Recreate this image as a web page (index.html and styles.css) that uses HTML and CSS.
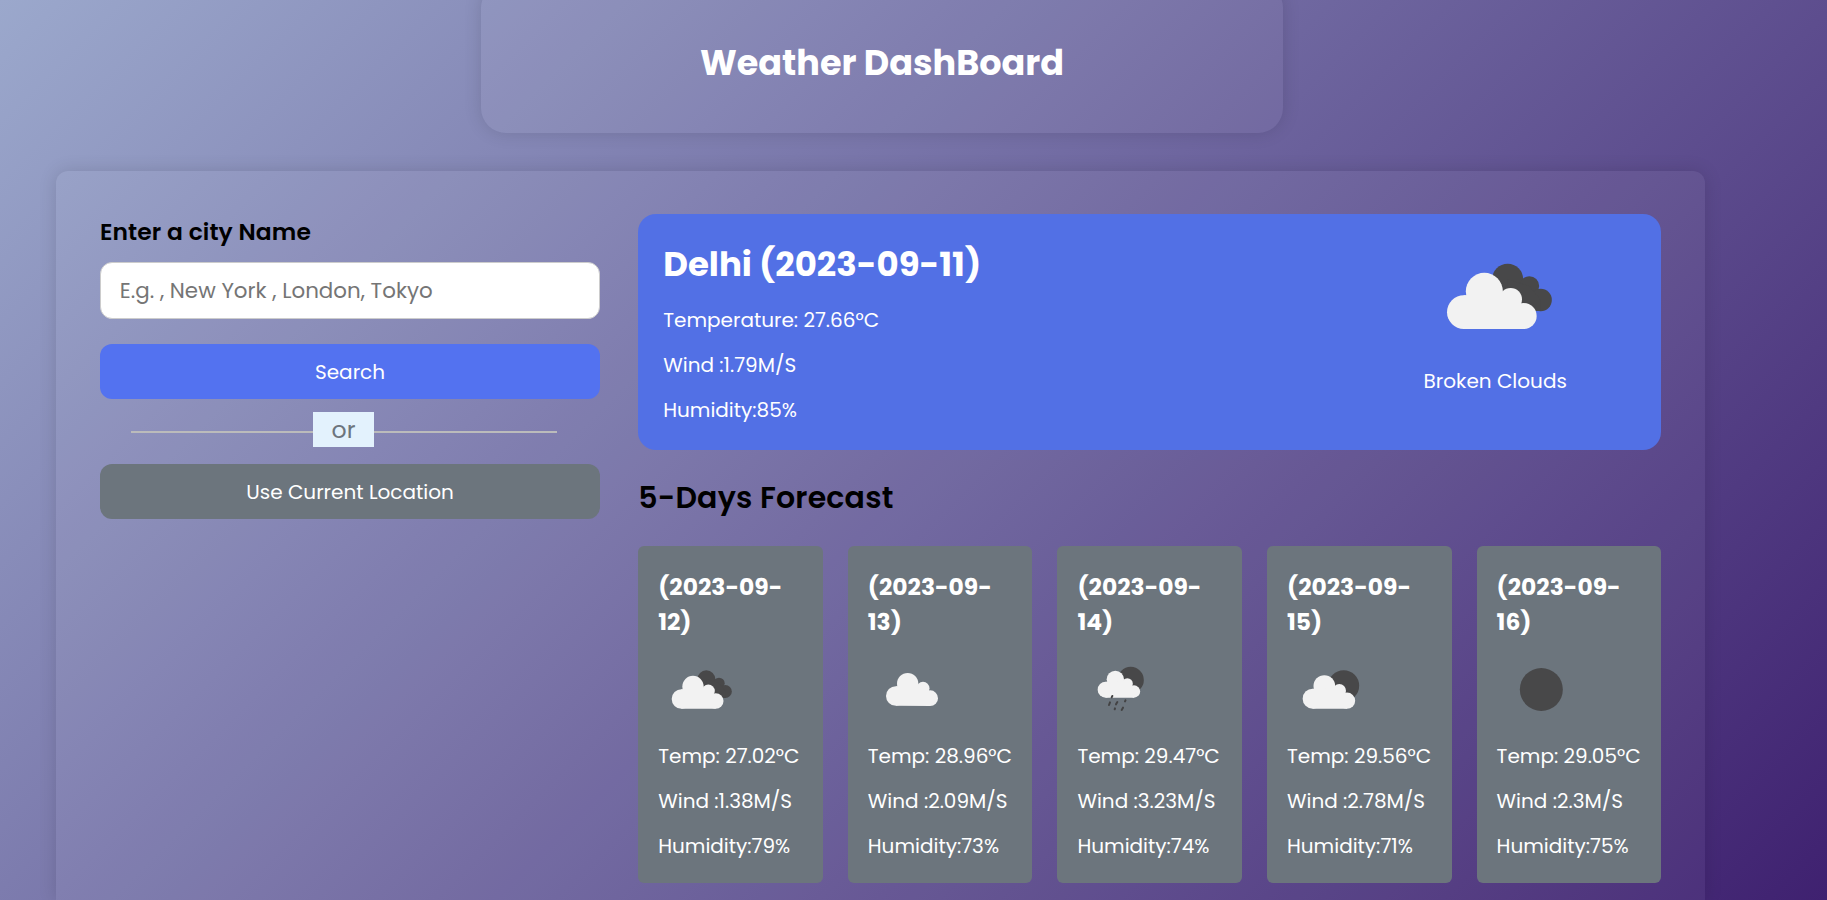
FILE: index.html
```html
<!DOCTYPE html>
<html lang="en">
<head>
<meta charset="utf-8">
<title>Weather DashBoard</title>
<link rel="stylesheet" href="styles.css">
</head>
<body>
<header class="header"><h1 class="title">Weather DashBoard</h1></header>
<main class="container">
  <section class="form">
    <h3 class="label">Enter a city Name</h3>
    <input class="city" type="text" placeholder="E.g. , New York , London, Tokyo">
    <button class="btn search">Search</button>
    <div class="separator"><i class="line line-start"></i><span class="or">or</span><i class="line"></i></div>
    <button class="btn location">Use Current Location</button>
  </section>
  <section class="data">
    <div class="current">
      <div class="details">
        <h2 class="city-name">Delhi (2023-09-11)</h2>
        <p class="row">Temperature: 27.66°C</p>
        <p class="row">Wind :1.79M/S</p>
        <p class="row">Humidity:85%</p>
      </div>
      <div class="summary">
        <svg class="icon-lg" viewBox="165 81 360 240">
          <g class="dark"><circle cx="383" cy="148" r="46.5"/><circle cx="448" cy="168" r="29.5"/><circle cx="482" cy="210" r="33.5"/><path d="M383 148L448 168L482 210V243H383Z"/></g>
          <g class="light"><circle cx="251.500" cy="246.500" r="50.500"/><circle cx="313" cy="184" r="55.500"/><circle cx="392" cy="208" r="34"/><circle cx="431" cy="258" r="39"/><path d="M251 297V196H313L392 200L431 240V297Z"/></g>
        </svg>
        <p class="desc">Broken Clouds</p>
      </div>
    </div>
    <h2 class="forecast-title">5-Days Forecast</h2>
    <div class="cards">
      <article class="card">
        <h3 class="date">(2023-09-12)</h3>
        <svg class="icon" viewBox="85 387 240 180">
          <g class="dark"><circle cx="230" cy="448" r="27"/><circle cx="268" cy="460" r="17"/><circle cx="287" cy="484.500" r="19.500"/><path d="M230 448L268 460L287 484V504H230Z"/></g>
          <g class="light"><circle cx="155.500" cy="507" r="29.500"/><circle cx="190" cy="469.500" r="32"/><circle cx="236" cy="483" r="19.500"/><circle cx="258" cy="513" r="23.500"/><path d="M155 536.500V478H190L236 478L258 500V536.500Z"/></g>
        </svg>
        <p class="row">Temp: 27.02°C</p><p class="row">Wind :1.38M/S</p><p class="row">Humidity:79%</p>
      </article>
      <article class="card">
        <h3 class="date">(2023-09-13)</h3>
        <svg class="icon" viewBox="714 387 240 180">
          <g class="light"><circle cx="797.500" cy="498" r="29.500"/><circle cx="833" cy="461" r="32"/><circle cx="879" cy="475" r="19.500"/><circle cx="900.500" cy="504.500" r="23.500"/><path d="M798 527.500V469H833L879 470L900 490V528Z"/></g>
        </svg>
        <p class="row">Temp: 28.96°C</p><p class="row">Wind :2.09M/S</p><p class="row">Humidity:73%</p>
      </article>
      <article class="card">
        <h3 class="date">(2023-09-14)</h3>
        <svg class="icon" viewBox="112 387 240 180">
          <circle class="dark" cx="273" cy="450" r="39.500"/>
          <g class="light"><circle cx="198" cy="479" r="24"/><circle cx="227" cy="448" r="26"/><circle cx="263" cy="461" r="16.500"/><circle cx="283" cy="484.500" r="18.500"/><path d="M198 503V455H227L263 458L283 475V503Z"/></g>
          <path class="rain" d="M218 498L216 502M211 517L208 525M233 516L229 523M257.500 511L256 514M226 535L225 538M250 533L246 540"/>
        </svg>
        <p class="row">Temp: 29.47°C</p><p class="row">Wind :3.23M/S</p><p class="row">Humidity:74%</p>
      </article>
      <article class="card">
        <h3 class="date">(2023-09-15)</h3>
        <svg class="icon" viewBox="741 387 240 180">
          <circle class="dark" cx="911" cy="467.500" r="46.500"/>
          <g class="light"><circle cx="818" cy="506" r="30"/><circle cx="853" cy="468" r="32.500"/><circle cx="898" cy="482" r="20"/><circle cx="921" cy="512" r="24.500"/><path d="M818 536.500V476H853L898 478L921 500V536.500Z"/></g>
        </svg>
        <p class="row">Temp: 29.56°C</p><p class="row">Wind :2.78M/S</p><p class="row">Humidity:71%</p>
      </article>
      <article class="card">
        <h3 class="date">(2023-09-16)</h3>
        <svg class="icon" viewBox="140 387 240 180"><circle class="dark" cx="273" cy="478.500" r="64.500"/></svg>
        <p class="row">Temp: 29.05°C</p><p class="row">Wind :2.3M/S</p><p class="row">Humidity:75%</p>
      </article>
    </div>
  </section>
</main>
</body>
</html>
```

FILE: styles.css
```css
* { margin: 0; padding: 0; box-sizing: border-box; }
body {
  height: 900px;
  overflow: hidden;
  display: flow-root;
  font-family: "Poppins", "Inter", sans-serif;
  background: linear-gradient(135deg, #9ba8cc, #3f2170);
}
.header {
  width: 802px;
  height: 150px;
  margin: -17px 0 0 481px;
  padding-top: 10px;
  display: flex;
  align-items: center;
  justify-content: center;
  border-radius: 25px;
  background: rgba(255, 255, 255, .05);
  box-shadow: 0 0 18px rgba(0, 0, 0, .13);
}
.title { font-size: 35px; line-height: 50px; font-weight: 700; color: #fff; white-space: nowrap; }
.container {
  display: flex;
  gap: 38.2px;
  width: 1649px;
  height: 729px;
  margin: 38px 0 0 56px;
  padding: 43px 43.8px 0 44px;
  border-radius: 12px 12px 0 0;
  background: rgba(255, 255, 255, .05);
  box-shadow: 0 0 18px rgba(0, 0, 0, .13);
}
.form { width: 500px; flex: none; display: flex; flex-direction: column; }
.label { margin: 2px 0 14px; font-size: 23.4px; line-height: 32px; font-weight: 600; letter-spacing: .1px; color: #000; }
.city {
  height: 57px;
  padding: 0 18.75px;
  border: 1px solid #ccc;
  border-radius: 12px;
  background: #fff;
  font: 400 21.4px "Poppins", "Inter", sans-serif;
}
.city::placeholder { color: #757575; }
.btn {
  height: 55px;
  border: 0;
  border-radius: 12px;
  color: #fff;
  font: 400 20px "Poppins", "Inter", sans-serif;
}
.search { margin-top: 25px; background: #5372f0; }
.location { background: #6c757d; }
.separator { display: flex; align-items: flex-start; height: 35px; margin: 13px 0 17px; padding: 0 43px 0 31px; }
.line { flex: 1; height: 2px; margin-top: 19px; background: #bbb; }
.line-start { flex: 0 0 182px; }
.or { width: 61px; height: 35px; background: #e3f2fd; color: #6c757d; font-size: 23.6px; line-height: 35px; text-align: center; }
.data { flex: 1; min-width: 0; }
.current {
  display: flex;
  justify-content: space-between;
  height: 236px;
  padding: 25px 86px 0 25px;
  border-radius: 18px;
  background: #5270e5;
  color: #fff;
}
.city-name { margin-bottom: 9px; font-size: 34px; line-height: 50px; font-weight: 700; white-space: nowrap; }
.row { font-size: 20px; line-height: 45px; white-space: nowrap; }
.summary { width: 160px; padding-top: 18px; display: flex; flex-direction: column; align-items: center; }
.icon-lg { width: 120px; height: 80px; }
.desc { margin-top: 29px; font-size: 20px; line-height: 30px; white-space: nowrap; }
.forecast-title { margin: 28px 0 28px; font-size: 30px; line-height: 40px; font-weight: 600; letter-spacing: .2px; color: #000; }
.cards { display: grid; grid-template-columns: repeat(5, 1fr); gap: 25px; }
.card { height: 337px; padding: 23px 20px 0; border-radius: 6px; background: #6c757d; color: #fff; min-width: 0; }
.date { font-size: 23.4px; line-height: 35px; font-weight: 700; }
.icon { display: block; width: 80px; height: 60px; margin: 20px 0 15px; }
.dark { fill: #484849; }
.light { fill: #f2f2f2; }
.rain { fill: none; stroke: #434344; stroke-width: 6; stroke-linecap: round; }
```
